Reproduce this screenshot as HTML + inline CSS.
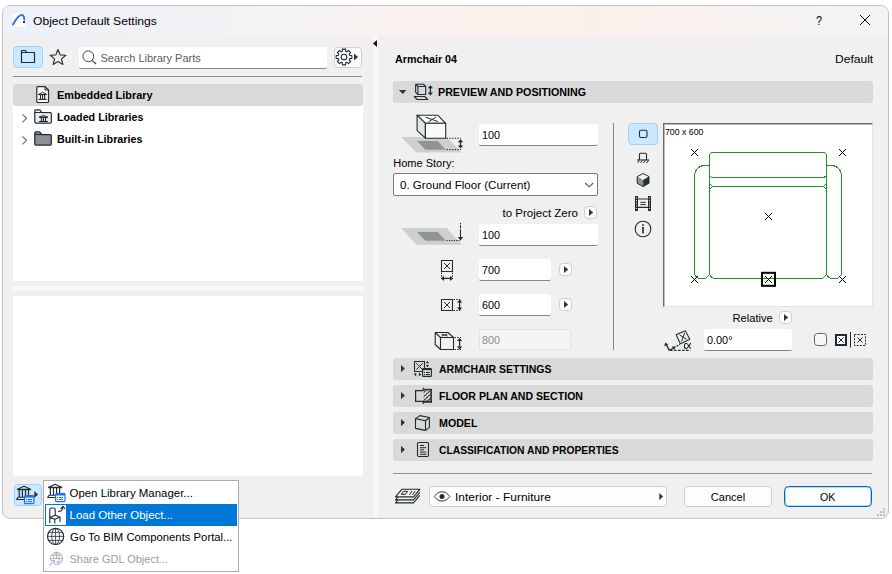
<!DOCTYPE html>
<html><head><meta charset="utf-8"><title>Object Default Settings</title>
<style>
html,body{margin:0;padding:0;background:#fff}
body{width:892px;height:574px;position:relative;overflow:hidden;font-family:"Liberation Sans", sans-serif;font-size:12px;color:#000}
.a{position:absolute;box-sizing:border-box}
.t{position:absolute;white-space:pre;transform-origin:0 0;display:inline-block}
.hd{position:absolute;left:393px;width:480px;height:22px;background:#d9d9d9;border-radius:3px}
.in{position:absolute;box-sizing:border-box;background:#fff;border:0;border-bottom:1px solid #868686;border-radius:3px 3px 2px 2px}
.sb{position:absolute;box-sizing:border-box;background:#fdfdfd;border:1px solid #cfcfcf;border-radius:3px}
.wp{position:absolute;background:#fff}
svg{position:absolute;left:0;top:0;overflow:visible}
</style></head><body>
<div class="a" style="left:2px;top:5px;width:887px;height:514px;border:1px solid #c3c3c3;border-radius:8px;background:#f0f0f0;overflow:hidden"><div class="a" style="left:0;top:0;width:885px;height:30px;background:linear-gradient(90deg,#eef1f8 0%,#f1f2f6 22%,#f8f2f0 42%,#fbf0ea 62%,#f8f1ee 78%,#f3f3f3 96%)"></div></div>
<div class="a" style="left:13px;top:46px;width:30px;height:22px;background:#cce8ff;border:1px solid #99d1ff;border-radius:4px"></div>
<div class="in" style="left:79px;top:47px;width:248px;height:22px;"></div>
<div class="sb" style="left:334px;top:47px;width:28px;height:21px;border-radius:4px"></div>
<div class="a" style="left:13px;top:76px;width:349px;height:1px;background:#8f8f8f"></div>
<div class="wp" style="left:13px;top:92px;width:350px;height:189px;"></div>
<div class="a" style="left:13px;top:84px;width:350px;height:22px;background:#d9d9d9;border-radius:3px"></div>
<div class="a" style="left:13px;top:286px;width:350px;height:5px;background:#f7f7f7"></div>
<div class="wp" style="left:13px;top:296px;width:350px;height:180px;"></div>
<div class="a" style="left:373px;top:36px;width:5px;height:482px;background:#f7f7f7"></div>
<div class="a" style="left:14px;top:484px;width:28px;height:22px;background:#cce8ff;border:1px solid #99d1ff;border-radius:4px"></div>
<div class="hd" style="top:81px"></div>
<div class="hd" style="top:358px"></div>
<div class="hd" style="top:385px"></div>
<div class="hd" style="top:412px"></div>
<div class="hd" style="top:439px"></div>
<div class="in" style="left:479px;top:124px;width:119px;height:22px;"></div>
<div class="a" style="left:393px;top:173px;width:205px;height:23px;background:#fff;border:1px solid #7a7a7a;border-radius:2px"></div>
<div class="sb" style="left:584px;top:206px;width:13px;height:13px;border-radius:4px"></div>
<div class="in" style="left:479px;top:224px;width:119px;height:22px;"></div>
<div class="in" style="left:479px;top:259px;width:72px;height:22px;"></div>
<div class="sb" style="left:559px;top:263px;width:13px;height:13px;border-radius:4px"></div>
<div class="in" style="left:479px;top:294px;width:72px;height:22px;"></div>
<div class="sb" style="left:559px;top:298px;width:13px;height:13px;border-radius:4px"></div>
<div class="a" style="left:479px;top:329px;width:92px;height:21px;background:#f5f5f5;border:1px solid #e2e2e2;border-radius:2px"></div>
<div class="a" style="left:613px;top:123px;width:1px;height:227px;background:#858585"></div>
<div class="a" style="left:628px;top:123px;width:30px;height:22px;background:#cce8ff;border:1px solid #99d1ff;border-radius:4px"></div>
<div class="a" style="left:663px;top:123px;width:210px;height:184px;background:#fff;border-top:1px solid #6b6b6b;border-left:1px solid #6b6b6b;border-right:1px solid #e3e3e3;border-bottom:1px solid #e3e3e3;box-shadow:inset 1px 1px 0 0 #b9b9b9"></div>
<div class="sb" style="left:779px;top:311px;width:13px;height:13px;border-radius:4px"></div>
<div class="in" style="left:704px;top:329px;width:88px;height:22px;"></div>
<div class="a" style="left:814px;top:333px;width:13px;height:13px;background:#f6f6f6;border:1px solid #626262;border-radius:3.5px"></div>
<div class="a" style="left:393px;top:473px;width:479px;height:1px;background:#8f8f8f"></div>
<div class="sb" style="left:429px;top:486px;width:238px;height:21px;border-radius:4px"></div>
<div class="sb" style="left:684px;top:486px;width:88px;height:21px;border-radius:4px"></div>
<div class="a" style="left:784px;top:486px;width:88px;height:21px;background:#fdfdfd;border:1px solid #0067c0;border-radius:4.5px;box-shadow:inset 0 0 0 0.3px #0067c0"></div>
<svg width="892" height="574" viewBox="0 0 892 574" fill="none" stroke="none">
<rect x="12" y="13" width="14" height="14" rx="2" fill="#fff" stroke="#e6e6e6" stroke-width="0.5"/>
<path d="M13 24.5C16 19 18.5 15 21.5 15C23.5 15 24.3 17 24.3 19.5" stroke="#3b6fe0" stroke-width="2" stroke-linecap="round"/>
<rect x="23" y="21" width="2" height="2" fill="#12309a"/>
<path d="M860 15L870 25M870 15L860 25" stroke="#000" stroke-width="1"/>
<path d="M21.5 62.5V50.5H25.5L26.5 52.5H34.5V62.5Z M21.5 52.5H26.5" stroke="#212b31" stroke-width="1.2" fill="none" stroke-linejoin="round"/>
<polygon points="58.00,49.50 60.12,54.89 65.89,55.24 61.42,58.91 62.88,64.51 58.00,61.40 53.12,64.51 54.58,58.91 50.11,55.24 55.88,54.89" stroke="#2b353b" stroke-width="1.2" stroke-linejoin="round"/>
<circle cx="88.3" cy="56.3" r="5.4" stroke="#444" stroke-width="1"/><path d="M92.2 60.4L96 64" stroke="#444" stroke-width="1.2"/>
<path d="M349.67 55.35L351.85 55.44L351.85 58.56L349.67 58.65L349.17 59.84L350.65 61.44L348.44 63.65L346.84 62.17L345.65 62.67L345.56 64.85L342.44 64.85L342.35 62.67L341.16 62.17L339.56 63.65L337.35 61.44L338.83 59.84L338.33 58.65L336.15 58.56L336.15 55.44L338.33 55.35L338.83 54.16L337.35 52.56L339.56 50.35L341.16 51.83L342.35 51.33L342.44 49.15L345.56 49.15L345.65 51.33L346.84 51.83L348.44 50.35L350.65 52.56L349.17 54.16Z" stroke="#212b31" stroke-width="1.1" stroke-linejoin="round"/><circle cx="344" cy="57" r="2.8" stroke="#212b31" stroke-width="1.1"/>
<path d="M354 53.5L358 57.0L354 60.5Z" fill="#333"/>
<path d="M377 40L373 43.5L377 47Z" fill="#111"/>
<path d="M38 86.6H45L48.5 90V101.5Q48.5 102.5 47.5 102.5H38Q36.8 102.5 36.8 101.5V87.6Q36.8 86.6 38 86.6Z" stroke="#212b31" stroke-width="1.2" fill="#fff" stroke-linejoin="round"/>
<path d="M45 86.5V90H48.5" stroke="#212b31" stroke-width="1" fill="none" />
<path d="M38.65 94.37L42.55 92.20L46.45 94.37Z" stroke="#212b31" stroke-width="0.9" stroke-linejoin="round" fill="none"/><path d="M38.35 94.52H46.75" stroke="#212b31" stroke-width="1.2"/><path d="M40.50 94.97V98.90M42.55 94.97V98.90M44.60 94.97V98.90" stroke="#212b31" stroke-width="1.15"/><path d="M38.35 99.40H46.75" stroke="#212b31" stroke-width="1.1"/>
<path d="M22.5 114.3L26.5 118.3L22.5 122.3" stroke="#6f6f6f" stroke-width="1.2"/>
<path d="M22.5 136.3L26.5 140.3L22.5 144.3" stroke="#6f6f6f" stroke-width="1.2"/>
<path d="M34.8 122V111Q34.8 109.9 35.9 109.9H39.2Q39.9 109.9 40.4 110.6L41.7 112.5H50.2Q51.3 112.5 51.3 113.6V122Q51.3 123.1 50.2 123.1H35.9Q34.8 123.1 34.8 122Z" stroke="#212b31" stroke-width="1.25" fill="#fff" stroke-linejoin="round"/>
<rect x="36" y="113.7" width="14.1" height="8.2" fill="#ececec"/>
<path d="M34.8 112.5H41.7" stroke="#212b31" stroke-width="1.1" fill="none" />
<path d="M39.25 117.17L43.45 115.30L47.65 117.17Z" stroke="#212b31" stroke-width="0.9" stroke-linejoin="round" fill="none"/><path d="M38.95 117.32H47.95" stroke="#212b31" stroke-width="1.2"/><path d="M41.40 117.77V121.00M43.45 117.77V121.00M45.50 117.77V121.00" stroke="#212b31" stroke-width="1.15"/><path d="M38.95 121.50H47.95" stroke="#212b31" stroke-width="1.1"/>
<path d="M34.8 144V133Q34.8 131.9 35.9 131.9H39.2Q39.9 131.9 40.4 132.6L41.7 134.5H50.2Q51.3 134.5 51.3 135.6V144Q51.3 145.1 50.2 145.1H35.9Q34.8 145.1 34.8 144Z" stroke="#212b31" stroke-width="1.25" fill="#8b9196" stroke-linejoin="round"/>
<path d="M34.8 134.5H41.7" stroke="#212b31" stroke-width="1.1" fill="none" />
<path d="M399 90H406.4L402.7 94Z" fill="#333"/>
<path d="M417.9 86.5H425.7V94.5H417.9Z M415.6 84.2H423.4L425.7 86.5 M415.6 84.2V92.2L417.9 94.5 M415.6 84.2L417.9 86.5" stroke="#212b31" stroke-width="1.1" fill="none" stroke-linejoin="round"/>
<path d="M414.3 96.5H424.7L427.7 99.5H417.3Z" stroke="#212b31" stroke-width="1.1" fill="none" stroke-linejoin="round"/>
<path d="M430.4 86.3V94.4" stroke="#212b31" stroke-width="1.3"/><path d="M427.7 88.3L430.4 85.3L433.09999999999997 88.3Z M427.7 92.4L430.4 95.4L433.09999999999997 92.4Z" fill="#212b31"/>
<path d="M401 365L405 368.6L401 372.2Z" fill="#333"/>
<path d="M401 392L405 395.6L401 399.2Z" fill="#333"/>
<path d="M401 419L405 422.6L401 426.2Z" fill="#333"/>
<path d="M401 446L405 449.6L401 453.2Z" fill="#333"/>
<path d="M414.5 361.5H424.5V371.5H414.5Z" stroke="#212b31" stroke-width="1.1" fill="none" />
<path d="M416.3 363.3L422.7 369.7M422.7 363.3L416.3 369.7" stroke="#212b31" stroke-width="1" fill="none" />
<path d="M425.8 363.2L427.5 360.9L429.2 363.2Z M425.8 364.9L427.5 367.2L429.2 364.9Z" fill="#212b31"/>
<path d="M416.2 372.6L413.8 374.4L416.2 376.2Z M418.9 372.6L421.3 374.4L418.9 376.2Z" fill="#212b31"/>
<rect x="422.6" y="368.6" width="8.8" height="7.8" rx="1" fill="#d9d9d9" stroke="#212b31" stroke-width="1.1"/>
<rect x="422.6" y="368.4" width="8.8" height="1.7" fill="#212b31"/>
<path d="M424 372.5H425M426 372.5H429.8M424 374.5H425M426 374.5H429.8" stroke="#212b31" stroke-width="1" fill="none" />
<defs><clipPath id="hc"><rect x="423.6" y="390.4" width="6.8" height="10.6"/></clipPath></defs>
<path d="M423.4 390.6H415.6V401.3H423.4" stroke="#212b31" stroke-width="1.2" fill="none" />
<g clip-path="url(#hc)"><path d="M422 394.3L428 388.6M422 398.3L432 388.8M422.3 402L432 392.8M426.5 402L432 396.8" stroke="#212b31" stroke-width="1.15" fill="none" stroke-dasharray="2.2 0.5"/></g>
<path d="M422.9 389.6H431.9" stroke="#212b31" stroke-width="1.5" fill="none" />
<path d="M422.9 401.7H431.9" stroke="#212b31" stroke-width="2" fill="none" />
<path d="M431.1 389V402.6" stroke="#212b31" stroke-width="1.6" fill="none" />
<path d="M423.4 387.8V390.3M423.4 402V403.9" stroke="#212b31" stroke-width="1.3" fill="none" />
<path d="M415.5 418.6L425.5 420.7V430.4L415.5 428.4Z M415.5 418.6L419.8 415.6L429.4 417.5L425.5 420.7 M429.4 417.5V427.6L425.5 430.4" stroke="#212b31" stroke-width="1.1" fill="none" stroke-linejoin="round"/>
<rect x="417.5" y="442.5" width="11" height="14" rx="1.2" stroke="#212b31" stroke-width="1.1"/>
<path d="M420 445.5H424M420 447.7H426M420 449.9H424M420 452.1H426.5M420 454.3H426.5" stroke="#212b31" stroke-width="1" fill="none" />
<path d="M401.1 137.1H446.6L462 152.5H416.4Z" fill="#cfcfcf"/>
<path d="M417.1 141H437.7L445.8 149.7H425.4Z" fill="#8e9599"/>
<path d="M417.1 115.2H437.7L445.7 123.3H425.4Z" stroke="#212b31" stroke-width="1.1" fill="#fbfbfb" stroke-linejoin="round"/>
<path d="M417.1 115.2L425.4 123.3V138.2L417.1 130.6Z" stroke="#212b31" stroke-width="1.1" fill="#e4e4e4" stroke-linejoin="round"/>
<path d="M425.4 123.3H445.7V138.2H425.4Z" stroke="#212b31" stroke-width="1.1" fill="#fafafa" stroke-linejoin="round"/>
<path d="M425.6 117.2L438 121.6M436 116.9L428.4 122" stroke="#212b31" stroke-width="1" fill="none" />
<path d="M446.5 138.3H461M446.5 149.6H461" stroke="#212b31" stroke-width="1" fill="none" stroke-dasharray="1.5 1.2"/>
<path d="M460.5 140.3V147.6" stroke="#212b31" stroke-width="1.3"/><path d="M457.8 142.3L460.5 139.3L463.2 142.3Z M457.8 145.6L460.5 148.6L463.2 145.6Z" fill="#212b31"/>
<path d="M401.1 228H446.6L462 244.8H416.4Z" fill="#cfcfcf"/>
<path d="M417.1 232H437.7L445.8 240.8H425.4Z" fill="#8e9599"/>
<path d="M446.5 240.5H460" stroke="#212b31" stroke-width="1" fill="none" stroke-dasharray="1.2 1.2"/>
<path d="M460.5 223V238" stroke="#212b31" stroke-width="1.1" fill="none" stroke-dasharray="1.3 1 3 1 20"/>
<path d="M457.8 237L460.5 240.6L463.2 237Z" fill="#212b31"/>
<path d="M441.5 260.5H452.5V271.5H441.5Z" stroke="#212b31" stroke-width="1.1" fill="none" />
<path d="M444 263L450 269M450 263L444 269" stroke="#212b31" stroke-width="1" fill="none" />
<path d="M441.5 272.5V279M452.5 272.5V279" stroke="#212b31" stroke-width="1" fill="none" stroke-dasharray="1.5 1.2"/>
<path d="M442 278.4H452" stroke="#212b31" stroke-width="1.3"/><path d="M444.0 275.7L441 278.4L444.0 281.09999999999997Z M450.0 275.7L453 278.4L450.0 281.09999999999997Z" fill="#212b31"/>
<path d="M441.5 299.5H452.5V310.5H441.5Z" stroke="#212b31" stroke-width="1.1" fill="none" />
<path d="M444 302L450 308M450 302L444 308" stroke="#212b31" stroke-width="1" fill="none" />
<path d="M453.5 299.5H461M453.5 310.5H461" stroke="#212b31" stroke-width="1" fill="none" stroke-dasharray="1.5 1.2"/>
<path d="M459.6 300.5V309.5" stroke="#212b31" stroke-width="1.3"/><path d="M456.90000000000003 302.5L459.6 299.5L462.3 302.5Z M456.90000000000003 307.5L459.6 310.5L462.3 307.5Z" fill="#212b31"/>
<path d="M440.5 337.5H453.5V349.5H440.5Z M435.2 332.5H448L453.5 337.5 M435.2 332.5L440.5 337.5 M435.2 332.5V344.5L440.5 349.5" stroke="#212b31" stroke-width="1.1" fill="none" stroke-linejoin="round"/>
<path d="M441.5 334L447.5 336M447.5 334L441.5 336" stroke="#212b31" stroke-width="0.9" fill="none" />
<path d="M454.5 337.5H461M454.5 349.5H461" stroke="#212b31" stroke-width="1" fill="none" stroke-dasharray="1.5 1.2"/>
<path d="M459.6 339V348.5" stroke="#212b31" stroke-width="1.3"/><path d="M456.90000000000003 341.0L459.6 338L462.3 341.0Z M456.90000000000003 346.5L459.6 349.5L462.3 346.5Z" fill="#212b31"/>
<path d="M585.2 183L589.2 186.8L593.2 183" stroke="#555" stroke-width="1.1"/>
<path d="M589 209L593.2 212.5L589 216Z" fill="#333"/>
<path d="M564 266L568.2 269.5L564 273Z" fill="#333"/>
<path d="M564 301L568.2 304.5L564 308Z" fill="#333"/>
<path d="M784 314L788.2 317.5L784 321Z" fill="#333"/>
<rect x="639.5" y="130.3" width="7.5" height="7.2" rx="1.5" stroke="#212b31" stroke-width="1.1"/>
<path d="M639.5 160V154.3Q639.5 153.3 640.5 153.3H645.5Q646.5 153.3 646.5 154.3V160" stroke="#212b31" stroke-width="1.1" fill="none" />
<path d="M637 160H649.2" stroke="#212b31" stroke-width="1.1" fill="none" />
<path d="M637.5 163L639.5 160.5M640.5 163L642.5 160.5M643.5 163L645.5 160.5M646.5 163L648.5 160.5" stroke="#212b31" stroke-width="1" fill="none" />
<path d="M643.1 173.5L649 176.6L643.1 180L637.2 176.6Z" fill="#f4f4f4"/>
<path d="M637.2 176.6L643.1 180V186.6L637.2 183.2Z" fill="#8e9599"/>
<path d="M649 176.6L643.1 180V186.6L649 183.2Z" fill="#27323a"/>
<path d="M643.1 173.5L649 176.6V183.2L643.1 186.6L637.2 183.2V176.6Z" stroke="#212b31" stroke-width="1" fill="none" stroke-linejoin="round"/>
<rect x="635" y="196" width="3" height="15" fill="#212b31"/><rect x="648" y="196" width="3" height="15" fill="#212b31"/>
<path d="M636.5 197.5V210" stroke="#fff" stroke-width="1" fill="none" stroke-dasharray="1 1.6"/>
<path d="M649.5 197.5V210" stroke="#fff" stroke-width="1" fill="none" stroke-dasharray="1 1.6"/>
<path d="M638 199H648M638 207.4H648" stroke="#212b31" stroke-width="1.1" fill="none" />
<path d="M640.3 202.4H645.8M640.3 204.6H645.8" stroke="#212b31" stroke-width="1" fill="none" />
<circle cx="643" cy="229" r="7.8" stroke="#212b31" stroke-width="1.1"/>
<rect x="642.2" y="227" width="1.6" height="6.5" fill="#212b31"/><rect x="642.2" y="224.2" width="1.6" height="1.7" fill="#212b31"/>
<g stroke="#1a9a22" stroke-width="1" fill="none" shape-rendering="crispEdges"><path d="M709.5 156 Q709.5 152.5 713 152.5 H823 Q826.5 152.5 826.5 156"/><path d="M709.5 174 Q709.8 177.5 713.5 177.5 H822.5 Q826.2 177.5 826.5 174"/><path d="M709.5 156V272.5 A6 6 0 0 0 715.5 278.5 H820.5 A6 6 0 0 0 826.5 272.5 V156"/><path d="M712.5 186.5H823.5"/><path d="M709.5 183.5L712.5 186.5L709.5 189.5 M826.5 183.5L823.5 186.5L826.5 189.5"/><path d="M709.5 165.5H704.5 A10 10.5 0 0 0 694.5 176 V272.5 A6 6 0 0 0 700.5 278.5 H703.5 A6 6 0 0 0 709.5 272.5"/><path d="M826.5 165.5H831.5 A10 10.5 0 0 1 841.5 176 V272.5 A6 6 0 0 1 835.5 278.5 H832.5 A6 6 0 0 1 826.5 272.5"/></g>
<path d="M691.0 149.0L698.0 156.0M698.0 149.0L691.0 156.0" stroke="#000" stroke-width="1"/>
<path d="M839.0 149.0L846.0 156.0M846.0 149.0L839.0 156.0" stroke="#000" stroke-width="1"/>
<path d="M765.0 213.0L772.0 220.0M772.0 213.0L765.0 220.0" stroke="#000" stroke-width="1"/>
<path d="M691.0 276.0L698.0 283.0M698.0 276.0L691.0 283.0" stroke="#000" stroke-width="1"/>
<path d="M839.0 276.0L846.0 283.0M846.0 276.0L839.0 283.0" stroke="#000" stroke-width="1"/>
<path d="M765.0 276.0L772.0 283.0M772.0 276.0L765.0 283.0" stroke="#000" stroke-width="1"/>
<rect x="762" y="272.8" width="13" height="13" stroke="#000" stroke-width="2"/>
<path d="M676.2 334.7L685.3 330.7L689.8 339.2L680.3 343.7Z" stroke="#212b31" stroke-width="1.05" fill="none" stroke-linejoin="round"/>
<path d="M679.6 335L686.6 339.3M684.6 333L681.6 341.3" stroke="#212b31" stroke-width="1" fill="none" />
<path d="M670 350.3H690.3" stroke="#212b31" stroke-width="1.3" fill="none" stroke-dasharray="2.6 1.4"/>
<path d="M669.4 350.4L666.2 344.6" stroke="#212b31" stroke-width="1.3" fill="none" />
<path d="M664.2 346.2L665.2 342.6L668.3 344.4Z" fill="#212b31"/>
<path d="M669.4 350.4L673 348.3" stroke="#212b31" stroke-width="1.3" fill="none" />
<path d="M671.8 346.6L676 346.4L674 350Z" fill="#212b31"/>
<path d="M676.5 346.3L680 344.3" stroke="#212b31" stroke-width="1.2" fill="none" stroke-dasharray="2 1.2"/>
<path d="M690.8 343C688.6 346.8 687.4 348.6 686.1 348.6C684.9 348.6 684.4 347.3 684.4 345.9C684.4 344.5 685 343.3 686.1 343.3C687.4 343.3 688.6 345.4 690.8 348.8" stroke="#212b31" stroke-width="1.1" fill="none" />
<rect x="836" y="335" width="10" height="10" stroke="#1d2a31" stroke-width="2" fill="#fff"/>
<path d="M838.4 337.4L843.6 342.6M843.6 337.4L838.4 342.6" stroke="#1d2a31" stroke-width="1"/>
<path d="M850.5 332V347.5" stroke="#212b31" stroke-width="1" fill="none" />
<rect x="854.5" y="334.5" width="11" height="11" stroke="#1d2a31" stroke-width="1" stroke-dasharray="2 1.2"/>
<path d="M857.4 337.4L862.6 342.6M862.6 337.4L857.4 342.6" stroke="#1d2a31" stroke-width="1"/>
<path d="M401.8 489.3H419.8L413.5 496.9H395.5Z" stroke="#212b31" stroke-width="1.1" fill="none" stroke-linejoin="round"/>
<path d="M419.8 492.3L413.5 499.9H395.5L398 497 M419.8 495.3L413.5 502.9H395.5L398 500" stroke="#212b31" stroke-width="1.1" fill="none" stroke-linejoin="round"/>
<path d="M403.5 491.3H407.5L405.5 494.3H401.3Z M412 491L409.5 494.8M415 491L412.5 494.8" stroke="#212b31" stroke-width="1" fill="none" />
<path d="M434.3 496.5C437 492.8 439.5 491.8 442 491.8C444.5 491.8 447 492.8 449.8 496.5C447 500 444.5 501 442 501C439.5 501 437 500 434.3 496.5Z" stroke="#212b31" stroke-width="1" fill="none" />
<circle cx="442" cy="496.4" r="2.5" fill="#212b31"/>
<path d="M659.3 493L663 496.6L659.3 500.2Z" fill="#333"/>
<rect x="883" y="508" width="2" height="2" fill="#bcbcbc"/>
<rect x="880" y="511" width="2" height="2" fill="#bcbcbc"/>
<rect x="883" y="511" width="2" height="2" fill="#bcbcbc"/>
<rect x="877" y="514" width="2" height="2" fill="#bcbcbc"/>
<rect x="880" y="514" width="2" height="2" fill="#bcbcbc"/>
<rect x="883" y="514" width="2" height="2" fill="#bcbcbc"/>
<g transform="translate(16.2 486)"><path d="M7.8 0.3L14.4 3.2H1.2Z" stroke="#212b31" stroke-width="1.1" stroke-linejoin="round" fill="none"/><path d="M1 3.6H14.6" stroke="#212b31" stroke-width="1.2"/><path d="M3.05 4V11M6.2 4V11M9.3 4V11M12.3 4V11" stroke="#212b31" stroke-width="1.2"/><path d="M1.7 11.2H13 M0.1 13.5H13 M1.7 11.2L0.3 13.5" stroke="#212b31" stroke-width="1.1"/><rect x="8.3" y="9.6" width="9.4" height="8" rx="1.2" fill="#cce8ff" stroke="#1f6bff" stroke-width="1.2"/><rect x="8.3" y="9.4" width="9.4" height="2.2" rx="0.6" fill="#1f6bff"/><path d="M9.7 13.5H10.7M11.6 13.5H15.8M9.7 15.6H10.7M11.6 15.6H15.8" stroke="#1f6bff" stroke-width="1"/></g>
<path d="M34.3 491L38.099999999999994 494.5L34.3 498Z" fill="#333"/>
</svg>
<span class="t" style="left:32.50px;top:13.95px;font-size:11.7px;line-height:14px;font-weight:400;color:#000;transform:scaleX(1.0362)">Object Default Settings</span>
<span class="t" style="left:815.50px;top:13.50px;font-size:13px;line-height:14px;font-weight:400;color:#000;transform:scaleX(0.8294)">?</span>
<span class="t" style="left:100.50px;top:51.19px;font-size:11.0px;line-height:14px;font-weight:400;color:#5c5c5c;transform:none">Search Library Parts</span>
<span class="t" style="left:57.00px;top:87.94px;font-size:11.0px;line-height:14px;font-weight:700;color:#000;transform:scaleX(0.9888)">Embedded Library</span>
<span class="t" style="left:57.00px;top:109.94px;font-size:11.0px;line-height:14px;font-weight:700;color:#000;transform:scaleX(0.9758)">Loaded Libraries</span>
<span class="t" style="left:57.00px;top:131.94px;font-size:11.0px;line-height:14px;font-weight:700;color:#000;transform:scaleX(0.9783)">Built-in Libraries</span>
<span class="t" style="left:394.50px;top:52.19px;font-size:11.0px;line-height:14px;font-weight:700;color:#000;transform:scaleX(0.9749)">Armchair 04</span>
<span class="t" style="left:834.90px;top:51.95px;font-size:11.7px;line-height:14px;font-weight:400;color:#000;transform:scaleX(1.0302)">Default</span>
<span class="t" style="left:438.00px;top:85.19px;font-size:11.0px;line-height:14px;font-weight:700;color:#000;transform:scaleX(0.9712)">PREVIEW AND POSITIONING</span>
<span class="t" style="left:481.50px;top:127.94px;font-size:11.0px;line-height:14px;font-weight:400;color:#000;transform:scaleX(0.9803)">100</span>
<span class="t" style="left:393.25px;top:155.93px;font-size:11.02px;line-height:14px;font-weight:400;color:#000;transform:none">Home Story:</span>
<span class="t" style="left:400.00px;top:177.74px;font-size:11.57px;line-height:14px;font-weight:400;color:#000;transform:none">0. Ground Floor (Current)</span>
<span class="t" style="left:502.50px;top:206.01px;font-size:11.51px;line-height:14px;font-weight:400;color:#000;transform:none">to Project Zero</span>
<span class="t" style="left:481.50px;top:228.44px;font-size:11.0px;line-height:14px;font-weight:400;color:#000;transform:scaleX(0.9803)">100</span>
<span class="t" style="left:481.50px;top:263.44px;font-size:11.0px;line-height:14px;font-weight:400;color:#000;transform:scaleX(0.9803)">700</span>
<span class="t" style="left:481.50px;top:298.19px;font-size:11.0px;line-height:14px;font-weight:400;color:#000;transform:scaleX(0.9803)">600</span>
<span class="t" style="left:481.50px;top:332.94px;font-size:11.0px;line-height:14px;font-weight:400;color:#8c8c8c;transform:scaleX(0.9803)">800</span>
<span class="t" style="left:439.00px;top:361.94px;font-size:11.0px;line-height:14px;font-weight:700;color:#000;transform:scaleX(0.9538)">ARMCHAIR SETTINGS</span>
<span class="t" style="left:439.00px;top:388.94px;font-size:11.0px;line-height:14px;font-weight:700;color:#000;transform:scaleX(0.9604)">FLOOR PLAN AND SECTION</span>
<span class="t" style="left:439.00px;top:415.94px;font-size:11.0px;line-height:14px;font-weight:700;color:#000;transform:scaleX(0.9690)">MODEL</span>
<span class="t" style="left:439.00px;top:442.94px;font-size:11.0px;line-height:14px;font-weight:700;color:#000;transform:scaleX(0.9354)">CLASSIFICATION AND PROPERTIES</span>
<span class="t" style="left:455.00px;top:489.70px;font-size:11.7px;line-height:14px;font-weight:400;color:#000;transform:scaleX(1.0253)">Interior - Furniture</span>
<span class="t" style="left:710.80px;top:490.17px;font-size:11.05px;line-height:14px;font-weight:400;color:#000;transform:none">Cancel</span>
<span class="t" style="left:820.10px;top:490.19px;font-size:11.0px;line-height:14px;font-weight:400;color:#000;transform:scaleX(0.9686)">OK</span>
<span class="t" style="left:665.00px;top:125.58px;font-size:10px;line-height:14px;font-weight:400;color:#000;transform:scale(0.8762,0.9)">700 x 600</span>
<span class="t" style="left:732.51px;top:311.14px;font-size:11.14px;line-height:14px;font-weight:400;color:#000;transform:none">Relative</span>
<span class="t" style="left:707.00px;top:332.94px;font-size:11.0px;line-height:14px;font-weight:400;color:#000;transform:scaleX(0.9880)">0.00°</span>
<div class="a" style="left:43px;top:480px;width:196px;height:92px;background:#fff;border:1px solid #a9abb2"></div><div class="a" style="left:45px;top:504px;width:192px;height:22px;background:#0078d7"></div><div class="a" style="left:45px;top:504px;width:22px;height:22px;background:#fff;border:1px solid #0078d7"></div>
<svg width="892" height="574" viewBox="0 0 892 574" fill="none" stroke="none">
<g transform="translate(47.3 484)"><path d="M7.8 0.3L14.4 3.2H1.2Z" stroke="#212b31" stroke-width="1.1" stroke-linejoin="round" fill="none"/><path d="M1 3.6H14.6" stroke="#212b31" stroke-width="1.2"/><path d="M3.05 4V11M6.2 4V11M9.3 4V11M12.3 4V11" stroke="#212b31" stroke-width="1.2"/><path d="M1.7 11.2H13 M0.1 13.5H13 M1.7 11.2L0.3 13.5" stroke="#212b31" stroke-width="1.1"/><rect x="8.3" y="9.6" width="9.4" height="8" rx="1.2" fill="#fff" stroke="#1f6bff" stroke-width="1.2"/><rect x="8.3" y="9.4" width="9.4" height="2.2" rx="0.6" fill="#1f6bff"/><path d="M9.7 13.5H10.7M11.6 13.5H15.8M9.7 15.6H10.7M11.6 15.6H15.8" stroke="#1f6bff" stroke-width="1"/></g>
<path d="M49.8 523V509.5Q49.8 508 51.3 508H53.7Q55.2 508 55.2 509.5V515.3 M49.8 517.5L55.2 515.3L60 517V522 M49.8 517.5L54.8 519.2L60 517 M54.8 519.2V523.5" stroke="#212b31" stroke-width="1.1" fill="none" stroke-linejoin="round"/>
<path d="M58.2 511.4Q62.6 511.6 62.9 506.8" stroke="#212b31" stroke-width="1.1" fill="none" />
<path d="M60.6 508.8L62.9 506.3L65 508.8" stroke="#212b31" stroke-width="1.1" fill="none" />
<circle cx="55.6" cy="536.4" r="8.1" stroke="#212b31" stroke-width="1.15"/>
<path d="M55.6 528.3V544.5M47.5 536.4H63.7M48.9 532.4H62.3M48.9 540.4H62.3" stroke="#212b31" stroke-width="0.8" fill="none" />
<ellipse cx="55.6" cy="536.4" rx="3.9" ry="8.1" stroke="#212b31" stroke-width="0.8"/>
<path d="M50.6 560.5A6.2 6.2 0 1 1 55 564.5" stroke="#b4b4b4" stroke-width="1" fill="none" />
<path d="M56.6 552.3V558M50.4 558.4H62.8M51.5 555.2H61.7M56.6 552.2C53.8 554.5 53.3 557 53.6 559M56.6 552.2C59.5 554.5 60.2 559 57.8 564.3 M56 562H61.8" stroke="#b4b4b4" stroke-width="1" fill="none" />
<path d="M49.3 565.7L54.3 560.7M51 560.5H54.5V564" stroke="#9bbcf7" stroke-width="1.1" fill="none" />
</svg>
<span class="t" style="left:69.50px;top:486.03px;font-size:11.45px;line-height:14px;font-weight:400;color:#000;transform:none">Open Library Manager...</span>
<span class="t" style="left:69.50px;top:508.02px;font-size:11.5px;line-height:14px;font-weight:400;color:#fff;transform:none">Load Other Object...</span>
<span class="t" style="left:70.10px;top:530.08px;font-size:11.31px;line-height:14px;font-weight:400;color:#000;transform:none">Go To BIM Components Portal...</span>
<span class="t" style="left:69.50px;top:552.19px;font-size:11.0px;line-height:14px;font-weight:400;color:#9d9d9d;transform:none">Share GDL Object...</span>
</body></html>
